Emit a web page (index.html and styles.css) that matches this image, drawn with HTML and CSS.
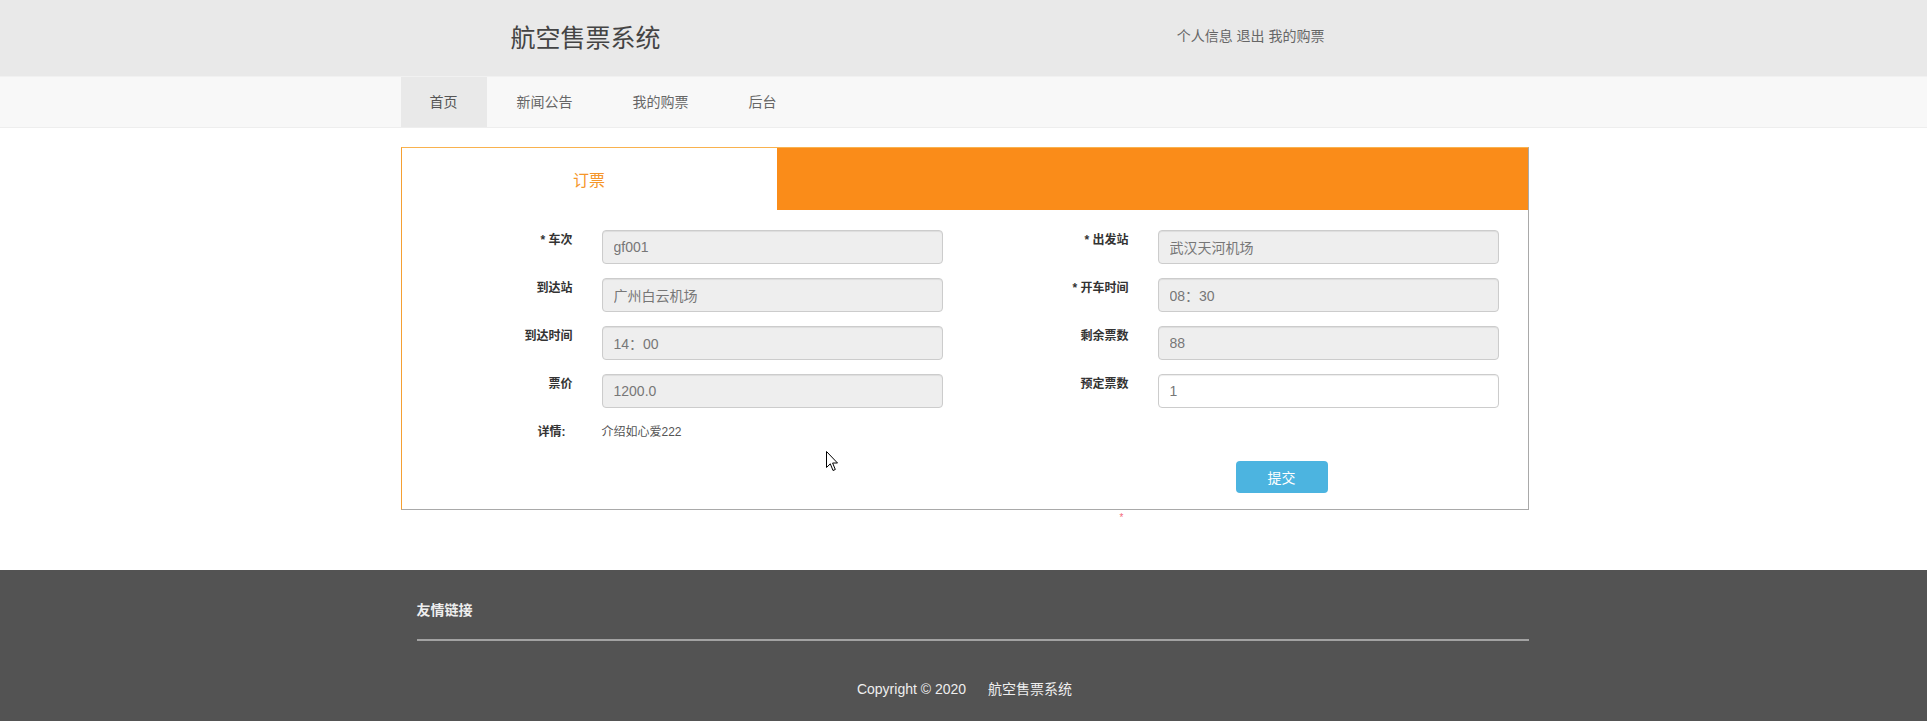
FILE: index.html
```html
<!DOCTYPE html>
<html lang="zh-CN">
<head>
<meta charset="utf-8">
<title>航空售票系统</title>
<link rel="stylesheet" href="styles.css">
</head>
<body>
<header class="top">
  <div class="container top-inner">
    <h1 class="brand">航空售票系统</h1>
    <div class="user-links"><a href="#">个人信息</a> <a href="#">退出</a> <a href="#">我的购票</a></div>
  </div>
</header>
<nav class="nav">
  <div class="container nav-inner">
    <a class="nav-item active" href="#">首页</a>
    <a class="nav-item" href="#">新闻公告</a>
    <a class="nav-item" href="#">我的购票</a>
    <a class="nav-item" href="#">后台</a>
  </div>
</nav>
<main class="container main">
  <section class="panel">
    <div class="tabs">
      <div class="tab active">订票</div>
      <div class="tab-fill"></div>
    </div>
    <form class="form">
      <div class="field"><label class="label">* 车次</label><input class="input" disabled value="gf001"></div>
      <div class="field"><label class="label">* 出发站</label><input class="input" disabled value="武汉天河机场"></div>
      <div class="field"><label class="label">到达站</label><input class="input" disabled value="广州白云机场"></div>
      <div class="field"><label class="label">* 开车时间</label><input class="input" disabled value="08：30"></div>
      <div class="field"><label class="label">到达时间</label><input class="input" disabled value="14：00"></div>
      <div class="field"><label class="label">剩余票数</label><input class="input" disabled value="88"></div>
      <div class="field"><label class="label">票价</label><input class="input" disabled value="1200.0"></div>
      <div class="field"><label class="label">预定票数</label><input class="input enabled" value="1"></div>
      <div class="field detail"><span class="label detail-label">详情:</span><span class="detail-text">介绍如心爱222</span></div>
      <div class="actions"><button type="button" class="btn">提交</button></div>
    </form>
  </section>
  <div class="note">*</div>
</main>
<footer class="footer">
  <div class="container footer-inner">
    <h4 class="footer-title">友情链接</h4>
    <div class="footer-line"></div>
    <p class="copyright"><span>Copyright © 2020</span><span class="site">航空售票系统</span></p>
  </div>
</footer>
<svg class="cursor" width="13" height="21" viewBox="0 0 13 21"><path d="M0.5 0.5 L0.5 16.5 L4.3 12.8 L7 19.5 L9.3 18.5 L6.6 12 L11.5 12 Z" fill="#fff" stroke="#000" stroke-width="1"/></svg>
</body>
</html>
```
FILE: styles.css
```css
* { box-sizing: border-box; }
html, body { margin: 0; padding: 0; background: #fff; }
body {
  font-family: "Liberation Sans", "Noto Sans CJK SC", sans-serif;
  font-size: 14px;
  color: #333;
  position: relative;
  min-height: 725px;
}
a { text-decoration: none; }
.container { width: 1128px; margin-left: calc(50% - 563px); }

.top { background: #e9e9e9; height: 76px; }
.top-inner { display: flex; align-items: center; height: 76px; }
.brand { margin: 0 0 0 110px; font-size: 25px; font-weight: normal; color: #444; line-height: 30px; }
.user-links { margin-left: auto; margin-right: 204px; margin-bottom: 4px; font-size: 14px; line-height: 20px; color: #666; }
.user-links a { color: #666; }

.nav { background: #f8f8f8; border-top: 1px solid #f1f1f1; border-bottom: 1px solid #eeeeee; }
.nav-inner { display: flex; height: 50px; }
.nav-item { display: block; padding: 0 30px; line-height: 50px; font-size: 14px; color: #666; }
.nav-item.active { background: #e9e9e9; color: #555; padding: 0 29px; }

.main { padding-top: 19px; }
.panel { border: 1px solid #a9a9a9; border-top-color: #f9b24e; border-left-color: #f5a033; }
.tabs { display: flex; height: 62px; }
.tab { width: 375px; display: flex; align-items: center; justify-content: center; font-size: 16px; color: #f5962a; background: #fff; }
.tab-fill { flex: 1; background: #fa8c19; }

.form { display: grid; grid-template-columns: 490px 490px; column-gap: 66px; row-gap: 14px; padding: 20px 0 16px 51px; }
.field { display: grid; grid-template-columns: 120px 341px; column-gap: 29px; align-items: start; }
.label { display: block; text-align: right; font-size: 12px; font-weight: bold; color: #333; line-height: 18px; padding-top: 1px; }
.input {
  height: 34px; width: 100%; padding: 6px 11px; font-family: "Liberation Sans", "Noto Sans CJK SC", sans-serif;
  font-size: 14px; color: #777; background: #eeeeee; border: 1px solid #cccccc; border-radius: 4px;
  box-shadow: inset 0 1px 1px rgba(0,0,0,0.075); outline: none;
}
.input.enabled { background: #fff; }
.detail { grid-column: 1 / -1; }
.detail-label { padding-right: 7px; line-height: 20px; padding-top: 0; }
.detail-text { font-size: 12px; color: #555; line-height: 20px; }
.actions { grid-column: 2; padding-left: 227px; padding-top: 5px; }
.btn {
  display: block; width: 92px; height: 32px; border: none; border-radius: 4px; background: #4cb4e0; color: #fff;
  font-family: "Liberation Sans", "Noto Sans CJK SC", sans-serif; font-size: 14px; padding: 0;
}

.note { height: 10px; margin: 3px 0 47px 719px; font-size: 10px; line-height: 10px; color: #f46a7a; }

.footer { background: #535353; }
.footer-inner { padding: 30px 0 22px; }
.footer-title { margin: 0 0 0 16px; font-size: 14px; font-weight: bold; color: #eee; line-height: 20px; }
.footer-line { margin: 19px 0 0 16px; height: 2px; background: #a2a2a2; }
.copyright { margin: 38px 0 0; text-align: center; font-size: 14px; line-height: 20px; color: #eee; }
.copyright .site { margin-left: 22px; }

.cursor { position: absolute; left: 826px; top: 451px; }
```
